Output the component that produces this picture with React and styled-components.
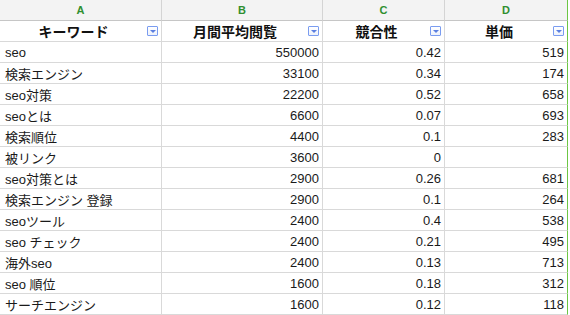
import { Fragment } from "react";
import { createGlobalStyle, styled } from "styled-components";

const GlobalStyle = createGlobalStyle`
  html, body {
    margin: 0;
    padding: 0;
    background: #fff;
  }
  body {
    font-family: "Liberation Sans", Arial, "Noto Sans CJK JP", sans-serif;
    color: #222;
  }
`;

const Sheet = styled.div`
  display: grid;
  grid-template-columns: 162px 161px 122px 123px;
  grid-auto-rows: 21px;
  width: 570px;
  height: 315px;
  overflow: hidden;
  background: #fff;
`;

const ColLetter = styled.div`
  display: flex;
  align-items: center;
  justify-content: center;
  background: #f3f3f3;
  border-right: 1px solid ${(p) => (p.$last ? "#6cc644" : "#d4d4d4")};
  border-bottom: 1px solid #c6c6c6;
  color: #2f8f2f;
  font-size: 11px;
  font-weight: bold;
`;

const HeadCell = styled.div`
  display: grid;
  grid-template-columns: 1fr auto;
  align-items: center;
  padding-right: 3px;
  border-right: 1px solid ${(p) => (p.$last ? "#6cc644" : "#d9d9d9")};
  border-bottom: 1px solid #d9d9d9;
  font-size: 14px;
  font-weight: bold;
  color: #111;
  text-align: center;
`;

const FilterButton = styled.div`
  width: 9px;
  height: 8px;
  border: 1px solid #7a9cf0;
  border-radius: 1px;
  background: linear-gradient(#fff, #eef2fb);
  display: flex;
  align-items: center;
  justify-content: center;
  &::after {
    content: "";
    border-left: 3px solid transparent;
    border-right: 3px solid transparent;
    border-top: 3px solid #5b7fe0;
  }
`;

const Cell = styled.div`
  display: flex;
  align-items: center;
  justify-content: ${(p) => (p.$num ? "flex-end" : "flex-start")};
  padding: 0 ${(p) => (p.$num ? "3px" : "0")} 0 ${(p) => (p.$num ? "0" : "5px")};
  border-right: 1px solid ${(p) => (p.$last ? "#6cc644" : "#d9d9d9")};
  border-bottom: 1px solid #d9d9d9;
  font-size: 13px;
  color: #1a1a1a;
  white-space: nowrap;
  overflow: hidden;
`;

const columns = ["A", "B", "C", "D"];
const headers = ["キーワード", "月間平均閲覧", "競合性", "単価"];

const rows = [
  ["seo", 550000, "0.42", 519],
  ["検索エンジン", 33100, "0.34", 174],
  ["seo対策", 22200, "0.52", 658],
  ["seoとは", 6600, "0.07", 693],
  ["検索順位", 4400, "0.1", 283],
  ["被リンク", 3600, "0", ""],
  ["seo対策とは", 2900, "0.26", 681],
  ["検索エンジン 登録", 2900, "0.1", 264],
  ["seoツール", 2400, "0.4", 538],
  ["seo チェック", 2400, "0.21", 495],
  ["海外seo", 2400, "0.13", 713],
  ["seo 順位", 1600, "0.18", 312],
  ["サーチエンジン", 1600, "0.12", 118],
];

const App = () => {
  return (
    <>
      <GlobalStyle />
      <Sheet>
        {columns.map((c, i) => (
          <ColLetter key={c} $last={i === 3}>
            {c}
          </ColLetter>
        ))}
        {headers.map((h, i) => (
          <HeadCell key={h} $last={i === 3}>
            <span>{h}</span>
            <FilterButton />
          </HeadCell>
        ))}
        {rows.map((r) => (
          <Fragment key={r[0]}>
            <Cell>{r[0]}</Cell>
            <Cell $num>{r[1]}</Cell>
            <Cell $num>{r[2]}</Cell>
            <Cell $num $last>
              {r[3]}
            </Cell>
          </Fragment>
        ))}
      </Sheet>
    </>
  );
};

export default App;
